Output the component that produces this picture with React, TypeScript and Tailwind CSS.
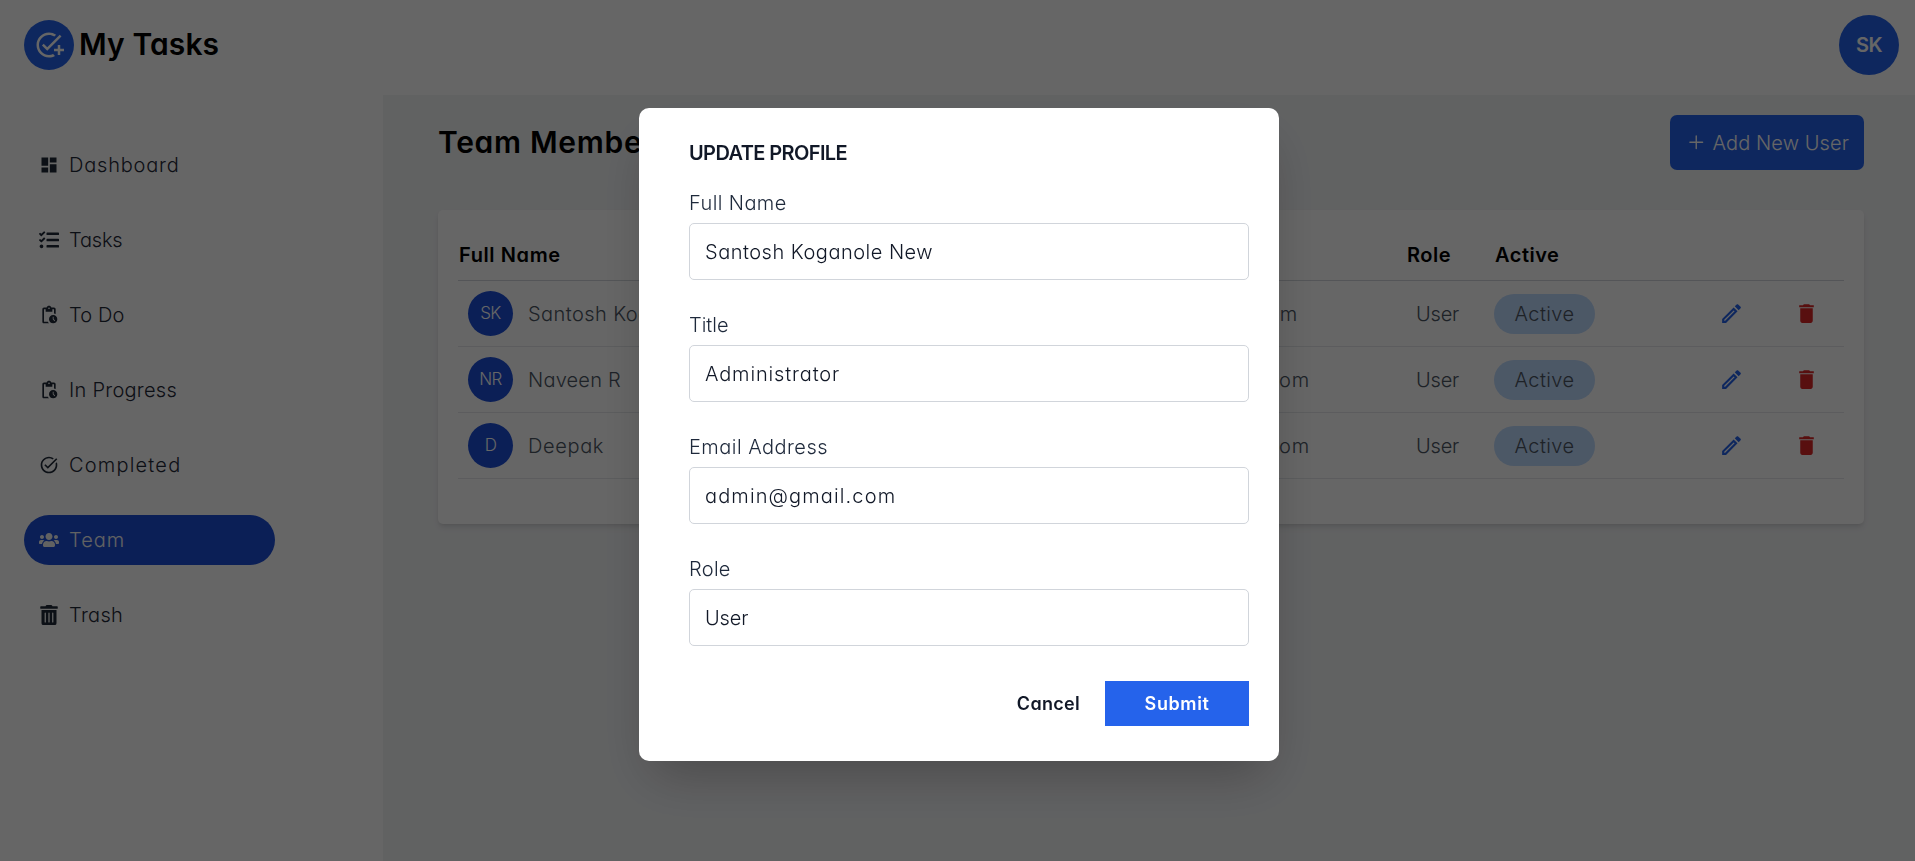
import type { ReactNode } from "react";
import {
  MdDashboard,
  MdDelete,
  MdOutlineAddTask,
  MdOutlineEdit,
  MdOutlinePendingActions,
  MdTaskAlt,
} from "react-icons/md";
import { FaTasks, FaTrashAlt, FaUsers } from "react-icons/fa";
import { IoAdd } from "react-icons/io5";

type NavItem = { label: string; icon: ReactNode; tracking: string; active?: boolean };

const navItems: NavItem[] = [
  { label: "Dashboard", icon: <MdDashboard />, tracking: "tracking-[0.8px]" },
  { label: "Tasks", icon: <FaTasks />, tracking: "tracking-[-0.2px]" },
  { label: "To Do", icon: <MdOutlinePendingActions />, tracking: "tracking-[0.1px]" },
  { label: "In Progress", icon: <MdOutlinePendingActions />, tracking: "tracking-[0.27px]" },
  { label: "Completed", icon: <MdTaskAlt />, tracking: "tracking-[1.2px]" },
  { label: "Team", icon: <FaUsers />, tracking: "tracking-[1px]", active: true },
  { label: "Trash", icon: <FaTrashAlt />, tracking: "tracking-[0.3px]" },
];

const members = [
  { initials: "SK", name: "Santosh Koganole", title: "Developer", email: "santosh@gmail.com", pad: "pr-[64px]", tracking: "tracking-[0.42px]" },
  { initials: "NR", name: "Naveen R", title: "Developer", email: "naveen@gmail.com", pad: "pr-[52px]", tracking: "tracking-[0.2px]" },
  { initials: "D", name: "Deepak", title: "Developer", email: "deepak@gmail.com", pad: "pr-[52px]", tracking: "tracking-[0.63px]" },
];

const fields = [
  { label: "Full Name", value: "Santosh Koganole New", lt: "tracking-[0.4px]", vt: "tracking-[0.5px]" },
  { label: "Title", value: "Administrator", lt: "tracking-[-0.02px]", vt: "tracking-[0.85px]" },
  { label: "Email Address", value: "admin@gmail.com", lt: "tracking-[0.47px]", vt: "tracking-[1.12px]" },
  { label: "Role", value: "User", lt: "tracking-[0.3px]", vt: "tracking-[-0.1px]" },
];

const columns =
  "grid grid-cols-[262px_240px_402px_87px_150px_1fr] items-center";

function Header() {
  return (
    <header className="flex h-[95px] items-start justify-between bg-white pl-6 pr-4 pt-[15px]">
      <div className="flex h-[60px] items-center gap-[5px]">
        <div className="flex size-[50px] items-center justify-center rounded-full bg-[#2563eb]">
          <MdOutlineAddTask className="size-[30px] text-white" />
        </div>
        <span className="pb-px text-[30px] font-semibold tracking-[0.1px] text-black">My Tasks</span>
      </div>
      <div className="flex size-[60px] items-center justify-center rounded-full bg-[#2563eb] text-[20px] font-semibold tracking-[-0.6px] text-white">
        SK
      </div>
    </header>
  );
}

function Sidebar() {
  return (
    <aside className="flex w-[383px] shrink-0 flex-col gap-[25px] bg-white pl-6 pt-[45px]">
      {navItems.map((item) => (
        <div
          key={item.label}
          className={`flex h-[50px] w-[251px] items-center gap-[10px] rounded-full px-[15px] text-[20px] ${
            item.active ? "bg-[#1d4ed8] text-[#f3f4f6]" : "text-[#1f2937]"
          }`}
        >
          <span className="flex w-5 justify-center">{item.icon}</span>
          <span className={item.tracking}>{item.label}</span>
        </div>
      ))}
    </aside>
  );
}

function TeamTable() {
  return (
    <section className="mt-10 h-[314px] rounded-[5px] bg-white px-5 pt-5 shadow-[0_4px_6px_-1px_rgb(0_0_0/0.1),0_2px_4px_-2px_rgb(0_0_0/0.1)]">
      <div className={`${columns} h-[51px] border-b border-[#d1d5db] pb-px text-[20px] font-semibold text-black`}>
        <span className="pl-px tracking-[0.6px]">Full Name</span>
        <span>Title</span>
        <span>Email</span>
        <span className="pl-[45px] tracking-[0.5px]">Role</span>
        <span className="pl-[46px] tracking-[0.5px]">Active</span>
      </div>
      {members.map((m) => (
        <div
          key={m.initials}
          className={`${columns} h-[66px] border-b border-[#e5e7eb] text-[20px] text-[#4b5563]`}
        >
          <div className="flex items-center gap-[15px] pl-[10px]">
            <div className="flex size-[45px] items-center justify-center rounded-full bg-[#1d4ed8] text-[17px] tracking-[-0.6px] text-white">
              {m.initials}
            </div>
            <span className={`whitespace-nowrap ${m.tracking}`}>{m.name}</span>
          </div>
          <span>{m.title}</span>
          <span className={`text-right tracking-[0.9px] ${m.pad}`}>{m.email}</span>
          <span className="pl-[54px] tracking-[-0.2px]">User</span>
          <div className="pl-[45px]">
            <span className="flex h-10 w-[101px] items-center justify-center rounded-full bg-[#bfdbfe] tracking-[0.4px]">
              Active
            </span>
          </div>
          <div className="flex items-center justify-end gap-[50px] pr-[25px]">
            <MdOutlineEdit className="size-[25px] text-[#2563eb]" />
            <MdDelete className="size-[25px] text-[#dc2626]" />
          </div>
        </div>
      ))}
    </section>
  );
}

function ProfileModal() {
  return (
    <div className="fixed inset-0 flex items-start justify-center bg-black/60 pl-[3px] pt-[108px]">
      <div className="h-[653px] w-[640px] rounded-[10px] bg-white pb-[35px] pl-[50px] pr-[30px] pt-[30px] shadow-[0_25px_50px_-12px_rgb(0_0_0/0.25)]">
        <h2 className="mb-5 text-[20px] font-semibold leading-[30px] tracking-[-0.6px] text-[#111827]">
          UPDATE PROFILE
        </h2>
        <div className="flex flex-col gap-[30px]">
          {fields.map((f) => (
            <label key={f.label} className="flex flex-col gap-[5px]">
              <span className={`text-[20px] leading-[30px] text-[#1e293b] ${f.lt}`}>{f.label}</span>
              <span
                className={`flex h-[57px] items-center rounded-[5px] border border-[#d1d5db] px-[15px] text-[20px] text-[#111827] ${f.vt}`}
              >
                {f.value}
              </span>
            </label>
          ))}
        </div>
        <div className="mt-[35px] flex justify-end text-[18px] font-semibold">
          <button className="h-[45px] px-[25px] tracking-[0.3px] text-[#111827]">Cancel</button>
          <button className="h-[45px] w-[144px] bg-[#2563eb] tracking-[0.6px] text-white">Submit</button>
        </div>
      </div>
    </div>
  );
}

export default function App() {
  return (
    <div className="flex h-screen flex-col overflow-hidden bg-[#f3f4f6] font-['Inter',sans-serif] font-light [font-feature-settings:'cv11']">
      <Header />
      <div className="flex min-h-0 flex-1">
        <Sidebar />
        <main className="flex-1 pl-[55px] pr-[51px] pt-5">
          <div className="flex h-[55px] items-center justify-between">
            <h1 className="text-[30px] font-semibold tracking-[0.7px] text-black">Team Members</h1>
            <button className="flex h-[55px] items-center gap-[5px] rounded-[7px] bg-[#2563eb] px-[15px] text-[20px] tracking-[0.1px] text-white">
              <IoAdd className="size-[22.5px]" />
              <span>Add New User</span>
            </button>
          </div>
          <TeamTable />
        </main>
      </div>
      <ProfileModal />
    </div>
  );
}
